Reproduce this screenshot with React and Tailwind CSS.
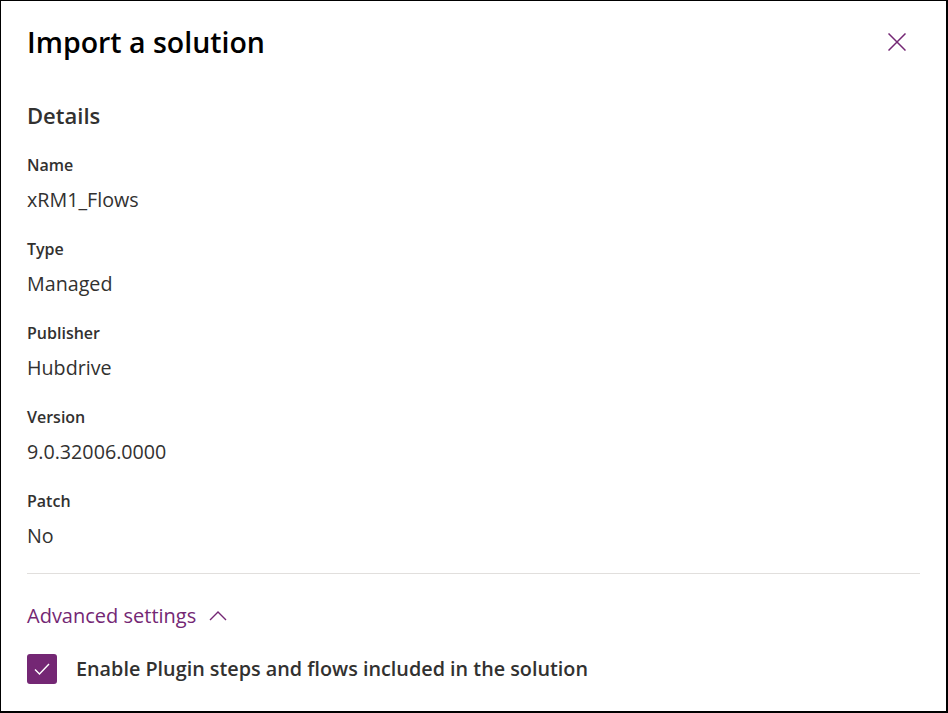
import React from "react";

const Field = ({ label, value }) => (
  <div className="flex flex-col">
    <div className="text-[16px] font-semibold text-[#323130] leading-[20px]">{label}</div>
    <div className="text-[19.7px] text-[#323130] leading-[26px] mt-[12px]">{value}</div>
  </div>
);

export default function App() {
  return (
    <div
      className="w-[948px] h-[713px] bg-white border-l border-t border-r-2 border-b-2 border-black flex flex-col pl-[26px] pr-[26px] box-border"
      style={{ fontFamily: '"Open Sans", "Noto Sans", sans-serif' }}
    >
      <div className="flex items-center justify-between h-[82px]">
        <div className="text-[28.5px] font-semibold text-black leading-[36px]">Import a solution</div>
        <svg width="18" height="18" viewBox="0 0 18 18" className="mr-[14px]">
          <path d="M0.5 0.5 L17.5 17.5 M17.5 0.5 L0.5 17.5" stroke="#742774" strokeWidth="1.5" />
        </svg>
      </div>
      <div className="text-[22px] font-semibold text-[#323130] leading-[28px] mt-[18px]">Details</div>
      <div className="flex flex-col gap-[26px] mt-[26px]">
        <Field label="Name" value="xRM1_Flows" />
        <Field label="Type" value="Managed" />
        <Field label="Publisher" value="Hubdrive" />
        <Field label="Version" value="9.0.32006.0000" />
        <Field label="Patch" value="No" />
      </div>
      <div className="h-px bg-[#e1dfdd] mt-[24px]" />
      <div className="flex items-center gap-[13px] mt-[28px] h-[28px]">
        <span className="text-[20px] text-[#742774] leading-[26px]">Advanced settings</span>
        <svg width="18" height="12" viewBox="0 0 18 12">
          <path d="M1 10 L9 2 L17 10" stroke="#742774" strokeWidth="1.4" fill="none" />
        </svg>
      </div>
      <div className="flex items-center gap-[19px] mt-[24px]">
        <div className="w-[30px] h-[30px] rounded-[3px] bg-[#742774] flex items-center justify-center">
          <svg width="18" height="14" viewBox="0 0 18 14">
            <path d="M2 7.5 L6.5 12 L16 2" stroke="white" strokeWidth="1.4" fill="none" />
          </svg>
        </div>
        <span className="text-[19.8px] font-semibold text-[#323130] leading-[26px]">Enable Plugin steps and flows included in the solution</span>
      </div>
    </div>
  );
}
